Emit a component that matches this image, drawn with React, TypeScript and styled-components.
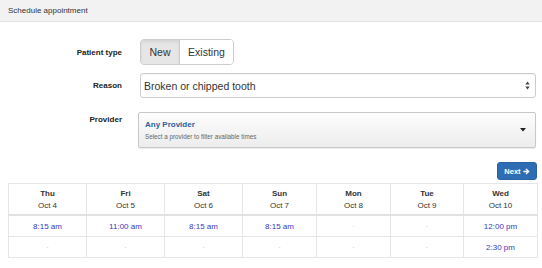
import React from "react";
import styled, { createGlobalStyle } from "styled-components";

const GlobalStyle = createGlobalStyle`
  body {
    margin: 0;
    background: #fff;
    font-family: "Liberation Sans", Arial, sans-serif;
    color: #333;
  }
`;

const Page = styled.div`
  width: 542px;
  height: 268px;
  overflow: hidden;
`;

const TopBar = styled.div`
  height: 21px;
  background: #f2f2f2;
  border-bottom: 1px solid #e2e2e2;
  display: flex;
  align-items: center;
  padding-left: 8px;
  font-size: 8px;
  color: #333;
`;

const Form = styled.div`
  padding: 17px 6px 0 8px;
`;

const Row = styled.div<{ $gap: number; $top?: boolean }>`
  display: grid;
  grid-template-columns: 114px 1fr;
  column-gap: 18px;
  align-items: ${(p) => (p.$top ? "start" : "center")};
  margin-bottom: ${(p) => p.$gap}px;
`;

const Label = styled.div<{ $top?: boolean }>`
  text-align: right;
  font-size: 8px;
  font-weight: bold;
  color: #222;
  padding-top: ${(p) => (p.$top ? "3px" : "0")};
`;

const Toggle = styled.div`
  display: inline-flex;
  justify-self: start;
  height: 26px;
  border: 1px solid #ccc;
  border-radius: 4px;
  overflow: hidden;
  box-sizing: border-box;
`;

const ToggleButton = styled.button<{ $active?: boolean; $w: number }>`
  width: ${(p) => p.$w}px;
  border: none;
  border-left: ${(p) => (p.$active ? "none" : "1px solid #ccc")};
  background: ${(p) => (p.$active ? "#e6e6e6" : "#fff")};
  box-shadow: ${(p) => (p.$active ? "inset 0 2px 3px rgba(0,0,0,0.08)" : "none")};
  font-family: inherit;
  font-size: 10.5px;
  color: #333;
  padding: 0;
`;

const Select = styled.div`
  height: 25px;
  box-sizing: border-box;
  border: 1px solid #ccc;
  border-radius: 3px;
  display: flex;
  align-items: center;
  justify-content: space-between;
  padding: 0 5px 0 3px;
  font-size: 10.5px;
  color: #333;
  box-shadow: inset 0 1px 1px rgba(0, 0, 0, 0.04);
`;

const ProviderBox = styled.div`
  margin-left: -2px;
  height: 36px;
  box-sizing: border-box;
  border: 1px solid #c8c8c8;
  border-radius: 2px;
  background: linear-gradient(#fdfdfd, #ececec);
  box-shadow: 0 1px 1px rgba(0, 0, 0, 0.08);
  display: flex;
  align-items: center;
  justify-content: space-between;
  padding: 0 9px 0 6px;
`;

const ProviderText = styled.div`
  display: flex;
  flex-direction: column;
  gap: 4px;
`;

const ProviderName = styled.div`
  font-size: 8px;
  font-weight: bold;
  color: #2d5f9e;
`;

const ProviderHint = styled.div`
  font-size: 6.3px;
  color: #666;
`;

const Actions = styled.div`
  display: flex;
  justify-content: flex-end;
  padding: 0 5px 3px 0;
`;

const NextButton = styled.button`
  width: 40px;
  height: 18px;
  border: 1px solid #2a63a4;
  border-radius: 3px;
  background: #2e6db4;
  color: #fff;
  font-family: inherit;
  font-size: 7.5px;
  font-weight: bold;
  display: flex;
  align-items: center;
  justify-content: center;
  gap: 2px;
  padding: 0;
`;

const Table = styled.table`
  margin: 0 5px 0 8px;
  width: 529px;
  border-collapse: collapse;
  table-layout: fixed;
  font-size: 8px;
`;

const HeadCell = styled.th`
  border: 1px solid #e6e6e6;
  border-bottom: 2px solid #e2e2e2;
  height: 30px;
  padding: 0;
  font-weight: normal;
  text-align: center;
  color: #333;
`;

const Day = styled.div`
  font-weight: bold;
  margin-bottom: 3px;
`;

const Cell = styled.td<{ $empty?: boolean }>`
  border: 1px solid #e6e6e6;
  height: 20px;
  padding: 0;
  text-align: center;
  color: ${(p) => (p.$empty ? "#bbb" : "#3838c0")};
  font-size: ${(p) => (p.$empty ? "6px" : "8px")};
`;

const days = [
  { day: "Thu", date: "Oct 4", w: 78, slots: ["8:15 am", ""] },
  { day: "Fri", date: "Oct 5", w: 78, slots: ["11:00 am", ""] },
  { day: "Sat", date: "Oct 6", w: 78, slots: ["8:15 am", ""] },
  { day: "Sun", date: "Oct 7", w: 74, slots: ["8:15 am", ""] },
  { day: "Mon", date: "Oct 8", w: 74, slots: ["", ""] },
  { day: "Tue", date: "Oct 9", w: 73, slots: ["", ""] },
  { day: "Wed", date: "Oct 10", w: 74, slots: ["12:00 pm", "2:30 pm"] },
];

const SortArrows = () => (
  <svg width="5" height="9" viewBox="0 0 5 9">
    <path d="M2.5 0.5 L4.7 3.6 H0.3 Z M2.5 8.5 L4.7 5.4 H0.3 Z" fill="#444" />
  </svg>
);

const Caret = () => (
  <svg width="6" height="4" viewBox="0 0 6 4">
    <path d="M0 0 H6 L3 3.6 Z" fill="#222" />
  </svg>
);

const ArrowRight = () => (
  <svg width="7" height="7" viewBox="0 0 10 10">
    <path d="M5 0.8 L9.4 5 L5 9.2 L3.6 7.8 L5.6 5.9 H0.6 V4.1 H5.6 L3.6 2.2 Z" fill="#fff" />
  </svg>
);

export default function App() {
  return (
    <Page>
      <GlobalStyle />
      <TopBar>Schedule appointment</TopBar>
      <Form>
        <Row $gap={8}>
          <Label>Patient type</Label>
          <Toggle>
            <ToggleButton $active $w={38}>New</ToggleButton>
            <ToggleButton $w={54}>Existing</ToggleButton>
          </Toggle>
        </Row>
        <Row $gap={14}>
          <Label>Reason</Label>
          <Select>
            <span>Broken or chipped tooth</span>
            <SortArrows />
          </Select>
        </Row>
        <Row $gap={14} $top>
          <Label $top>Provider</Label>
          <ProviderBox>
            <ProviderText>
              <ProviderName>Any Provider</ProviderName>
              <ProviderHint>Select a provider to filter available times</ProviderHint>
            </ProviderText>
            <Caret />
          </ProviderBox>
        </Row>
      </Form>
      <Actions>
        <NextButton>
          Next <ArrowRight />
        </NextButton>
      </Actions>
      <Table>
        <colgroup>
          {days.map((d) => (
            <col key={d.day} style={{ width: d.w }} />
          ))}
        </colgroup>
        <thead>
          <tr>
            {days.map((d) => (
              <HeadCell key={d.day}>
                <Day>{d.day}</Day>
                <div>{d.date}</div>
              </HeadCell>
            ))}
          </tr>
        </thead>
        <tbody>
          {[0, 1].map((r) => (
            <tr key={r}>
              {days.map((d) => (
                <Cell key={d.day} $empty={!d.slots[r]}>
                  {d.slots[r] || "-"}
                </Cell>
              ))}
            </tr>
          ))}
        </tbody>
      </Table>
    </Page>
  );
}
